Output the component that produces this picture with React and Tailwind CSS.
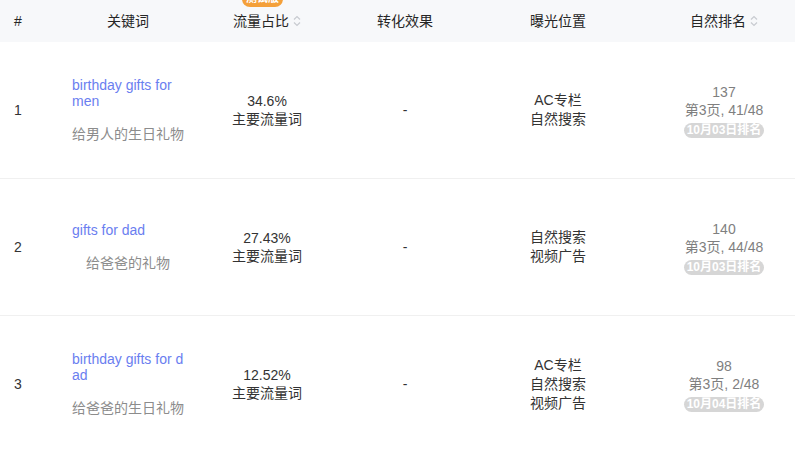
import React from 'react';

const rows = [
    {
        id: 1,
        keyword: 'birthday gifts for men',
        zh: '给男人的生日礼物',
        share: '34.6%',
        places: ['AC专栏', '自然搜索'],
        rank: '137',
        page: '第3页, 41/48',
        date: '10月03日排名',
    },
    {
        id: 2,
        keyword: 'gifts for dad',
        zh: '给爸爸的礼物',
        share: '27.43%',
        places: ['自然搜索', '视频广告'],
        rank: '140',
        page: '第3页, 44/48',
        date: '10月03日排名',
    },
    {
        id: 3,
        keyword: 'birthday gifts for dad',
        zh: '给爸爸的生日礼物',
        share: '12.52%',
        places: ['AC专栏', '自然搜索', '视频广告'],
        rank: '98',
        page: '第3页, 2/48',
        date: '10月04日排名',
    },
];

const SortIcon = () => (
    <svg width="8" height="14" viewBox="0 0 8 14" className="ml-[4px]" fill="none" stroke="#c8cbd0" strokeWidth="1.2">
        <path d="M1 5.5 L4 2.5 L7 5.5" />
        <path d="M1 8.5 L4 11.5 L7 8.5" />
    </svg>
);

const grid = 'grid grid-cols-[57px_142px_136px_140px_166px_166px] w-[807px]';

export default function App() {
    return (
        <div className="w-[795px] h-[452px] overflow-hidden bg-white text-[14px] text-[#262626]" style={{ fontFamily: '"Liberation Sans", Arial, "Noto Sans CJK SC", sans-serif' }}>
            {/* 表头 */}
            <div className={`${grid} h-[42px] bg-[#f7f8fa] items-center`}>
                <div className="pl-[14px]">#</div>
                <div className="text-center">关键词</div>
                <div className="relative flex justify-center items-center">
                    <span className="relative">
                        流量占比
                        {/* 测试版标签, 页面上方被裁掉一部分 */}
                        <span className="absolute left-[9px] top-[-21px] w-[41px] text-center h-[17px] leading-[17px] rounded-[8px] bg-[#f4a03a] text-white text-[11px] font-bold">测试版</span>
                    </span>
                    <SortIcon />
                </div>
                <div className="text-center">转化效果</div>
                <div className="text-center">曝光位置</div>
                <div className="flex justify-center items-center">
                    自然排名
                    <SortIcon />
                </div>
            </div>

            {rows.map(row => (
                <div key={row.id} className={`${grid} h-[137px] items-center border-b border-[#f0f0f0]`}>
                    <div className="pl-[14px] text-[#333]">{row.id}</div>
                    <div className="px-[15px] flex flex-col">
                        <div className="text-[#6a7ef0] leading-[16px] break-all w-[113px]">{row.keyword}</div>
                        <div className="mt-[17px] text-center leading-[17px] text-[#8c8c8c]">{row.zh}</div>
                    </div>
                    <div className="text-center leading-[18px] text-[#333]">
                        <div>{row.share}</div>
                        <div>主要流量词</div>
                    </div>
                    <div className="text-center text-[#333]">-</div>
                    <div className="text-center leading-[19px] text-[#333]">
                        {row.places.map(p => <div key={p}>{p}</div>)}
                    </div>
                    <div className="flex flex-col items-center text-[#7f7f7f] leading-[18px]">
                        <div>{row.rank}</div>
                        <div>{row.page}</div>
                        <div className="mt-[4px] h-[15px] leading-[15px] px-[3px] rounded-full bg-[#d6d6d6] text-white text-[12px] font-bold">{row.date}</div>
                    </div>
                </div>
            ))}
        </div>
    );
}
